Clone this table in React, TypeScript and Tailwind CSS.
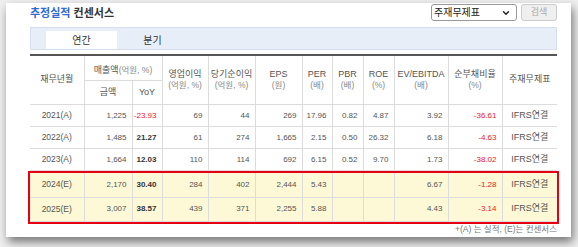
import { ChevronDown } from 'lucide-react'

type Row = {
  period: string
  amount: string
  yoy: string
  op: string
  net: string
  eps: string
  per: string
  pbr: string
  roe: string
  ev: string
  debt: string
}

const ACTUAL: Row[] = [
  { period: '2021(A)', amount: '1,225', yoy: '-23.93', op: '69', net: '44', eps: '269', per: '17.96', pbr: '0.82', roe: '4.87', ev: '3.92', debt: '-36.61' },
  { period: '2022(A)', amount: '1,485', yoy: '21.27', op: '61', net: '274', eps: '1,665', per: '2.15', pbr: '0.50', roe: '26.32', ev: '6.18', debt: '-4.63' },
  { period: '2023(A)', amount: '1,664', yoy: '12.03', op: '110', net: '114', eps: '692', per: '6.15', pbr: '0.52', roe: '9.70', ev: '1.73', debt: '-38.02' },
]

const ESTIMATE: Row[] = [
  { period: '2024(E)', amount: '2,170', yoy: '30.40', op: '284', net: '402', eps: '2,444', per: '5.43', pbr: '', roe: '', ev: '6.67', debt: '-1.28' },
  { period: '2025(E)', amount: '3,007', yoy: '38.57', op: '439', net: '371', eps: '2,255', per: '5.88', pbr: '', roe: '', ev: '4.43', debt: '-3.14' },
]

const COLS = [54, 48, 30, 46, 47, 47, 30, 31, 31, 54, 54, 55]

function Cols() {
  return (
    <colgroup>
      {COLS.map((w, i) => (
        <col key={i} style={{ width: w }} />
      ))}
    </colgroup>
  )
}

const td = 'border-b border-r border-[#dcdcdc] text-right pr-[5px] text-[8px] text-[#555]'

function DataRow({ row, tall }: { row: Row; tall?: boolean }) {
  const neg = row.yoy.startsWith('-')
  return (
    <tr className={tall ? 'h-[24px]' : 'h-[22px]'}>
      <td className="border-b border-r border-[#dcdcdc] text-center text-[8.5px] text-[#555]">{row.period}</td>
      <td className={td}>{row.amount}</td>
      <td className={td + (neg ? ' !text-[#e8202a]' : ' font-bold !text-[#333]')}>{row.yoy}</td>
      <td className={td}>{row.op}</td>
      <td className={td}>{row.net}</td>
      <td className={td}>{row.eps}</td>
      <td className={td}>{row.per}</td>
      <td className={td}>{row.pbr}</td>
      <td className={td}>{row.roe}</td>
      <td className={td}>{row.ev}</td>
      <td className={td + ' !text-[#e8202a]'}>{row.debt}</td>
      <td className="border-b border-[#dcdcdc] text-center text-[9px] text-[#555]">IFRS연결</td>
    </tr>
  )
}

function Head({ title, unit }: { title: string; unit?: string }) {
  return (
    <th rowSpan={2} className="border-b border-r border-[#dcdcdc] font-normal leading-[11px]">
      <div className="text-[9px] text-[#555]">{title}</div>
      {unit && <div className="text-[8.5px] text-[#888]">{unit}</div>}
    </th>
  )
}

export default function App() {
  return (
    <div className="h-[247px] w-[578px] overflow-hidden bg-[#efefef] pl-[6px] pt-[3px] font-['Liberation_Sans','Noto_Sans_CJK_KR',sans-serif]">
      <div className="h-[234px] w-[565px] bg-white pl-[24px] pr-[14px] shadow-[2px_5px_9px_rgba(0,0,0,0.5)]">
        <div className="flex h-[24px] items-start justify-between pt-px">
          <h2 className="h-[19px] text-[11px] font-bold leading-[19px] text-[#333]">
            <span className="text-[#2f6bd4]">추정실적</span> 컨센서스
          </h2>
          <div className="flex items-center gap-[4px]">
            <div className="flex h-[17px] w-[86px] items-center justify-between rounded-[3px] border border-[#999] pl-[2px] pr-[5px] text-[10px] text-[#222]">
              <span>주재무제표</span>
              <ChevronDown className="h-[10px] w-[10px]" strokeWidth={3.5} />
            </div>
            <button className="h-[17px] w-[36px] rounded-[3px] border border-[#ccc] bg-[#efefef] text-[9px] text-[#aaa]">
              검색
            </button>
          </div>
        </div>

        <div className="flex h-[23px] items-end border border-[#d5def0] bg-[#e8eef8] pl-[15px]">
          <div className="flex h-[18px] w-[71px] items-center justify-center bg-white text-[10px] text-[#333]">연간</div>
          <div className="flex h-[18px] w-[71px] items-center justify-center text-[10px] text-[#333]">분기</div>
        </div>

        <table className="mt-[4px] w-[527px] table-fixed border-collapse border-t-2 border-t-[#555]">
          <Cols />
          <thead>
            <tr className="h-[23px]">
              <th rowSpan={2} className="border-b border-r border-[#dcdcdc] text-[9px] font-normal text-[#555]">재무년월</th>
              <th colSpan={2} className="border-b border-r border-[#dcdcdc] font-normal">
                <span className="text-[9px] text-[#555]">매출액</span>
                <span className="text-[8.5px] text-[#888]">(억원, %)</span>
              </th>
              <Head title="영업이익" unit="(억원, %)" />
              <Head title="당기순이익" unit="(억원, %)" />
              <Head title="EPS" unit="(원)" />
              <Head title="PER" unit="(배)" />
              <Head title="PBR" unit="(배)" />
              <Head title="ROE" unit="(%)" />
              <Head title="EV/EBITDA" unit="(배)" />
              <Head title="순부채비율" unit="(%)" />
              <th rowSpan={2} className="border-b border-[#dcdcdc] text-[9px] font-normal text-[#555]">주재무제표</th>
            </tr>
            <tr className="h-[24px]">
              <th className="border-b border-r border-[#dcdcdc] text-[9px] font-normal text-[#555]">금액</th>
              <th className="border-b border-r border-[#dcdcdc] text-[9px] font-normal text-[#555]">YoY</th>
            </tr>
          </thead>
          <tbody>
            {ACTUAL.map((r) => (
              <DataRow key={r.period} row={r} />
            ))}
          </tbody>
        </table>

        <div className="-mx-[2px] w-[531px] border-2 border-[#e60012]">
          <table className="w-[527px] table-fixed border-collapse bg-[#fdf8d6]">
            <Cols />
            <tbody>
              {ESTIMATE.map((r) => (
                <DataRow key={r.period} row={r} tall />
              ))}
            </tbody>
          </table>
        </div>

        <p className="w-[527px] text-right text-[8.5px] leading-[10px] text-[#777]">+(A) 는 실적, (E)는 컨센서스</p>
      </div>
    </div>
  )
}
